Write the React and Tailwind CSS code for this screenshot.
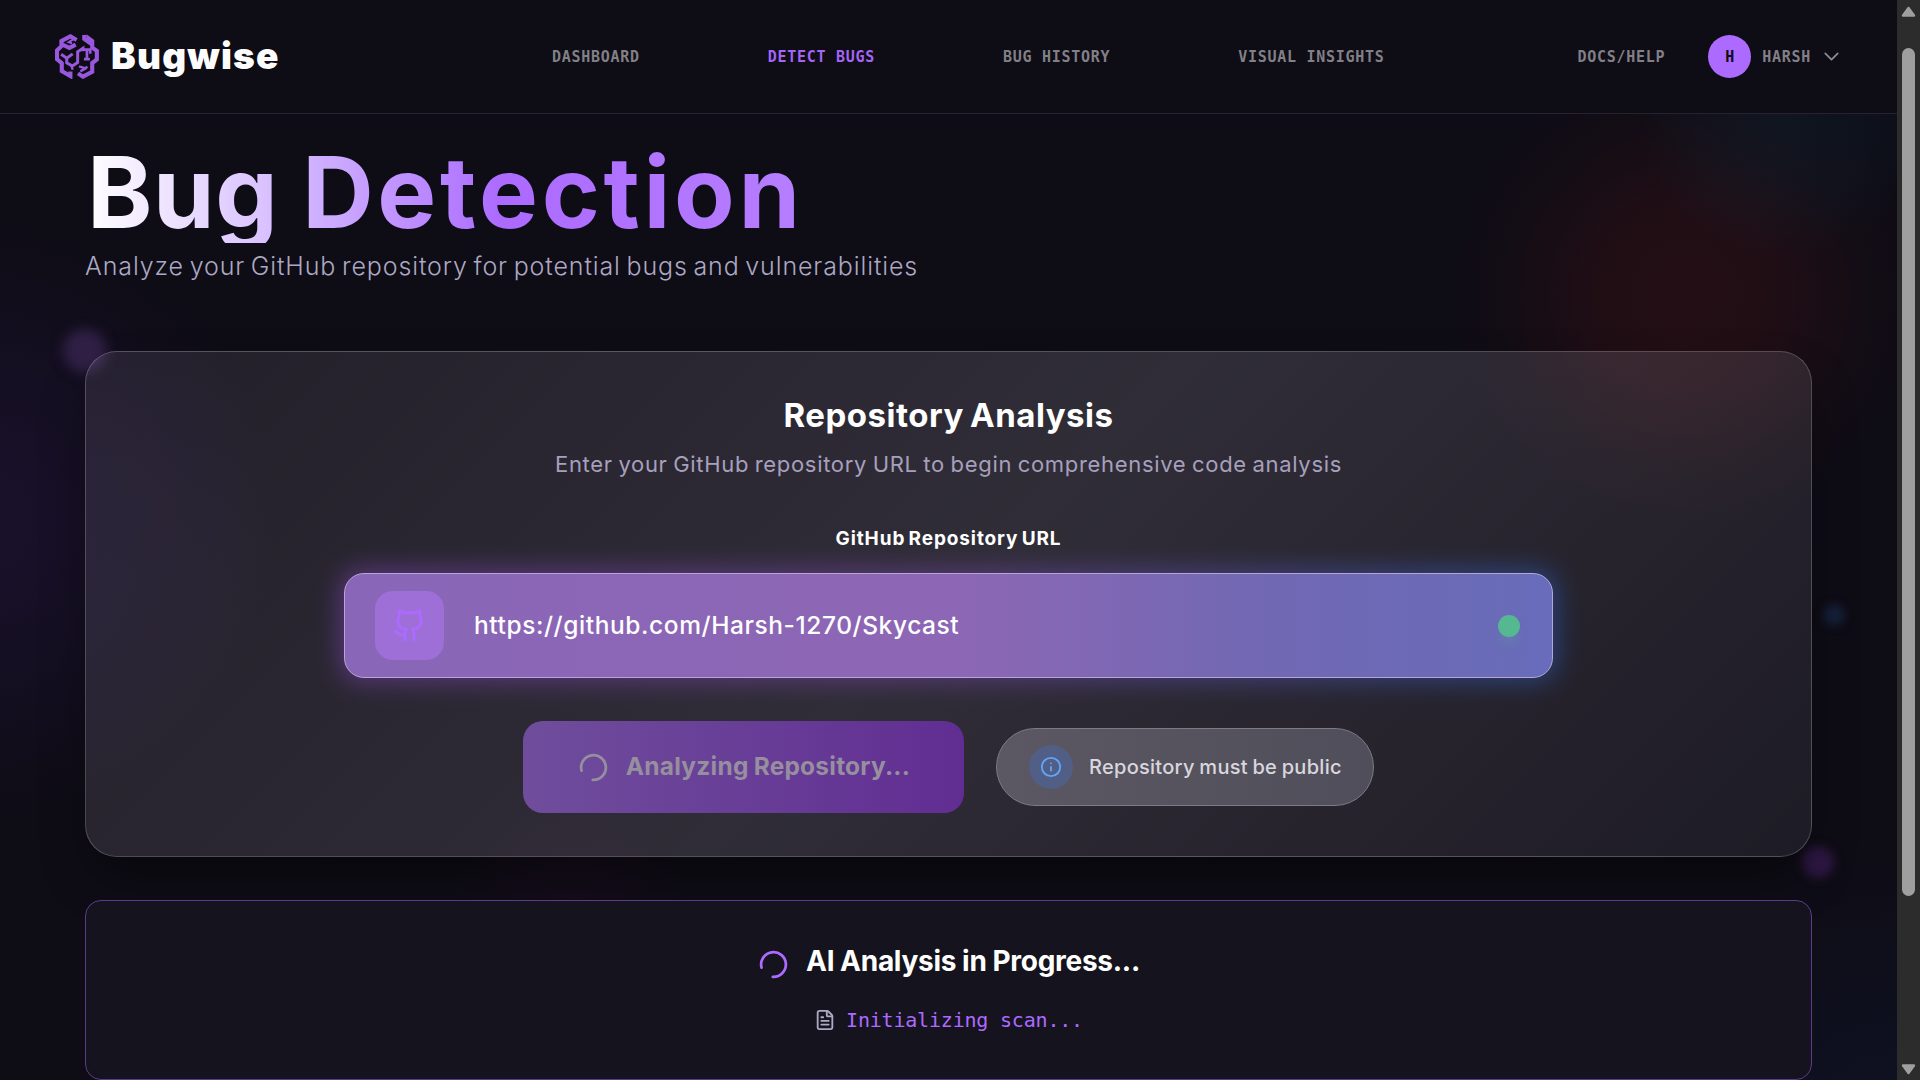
import { ChevronDown, FileText, Github, Info, LoaderCircle } from "lucide-react";

const NAV = [
  { label: "DASHBOARD" },
  { label: "DETECT BUGS", active: true },
  { label: "BUG HISTORY" },
  { label: "VISUAL INSIGHTS" },
];

function BrainLogo() {
  return (
    <svg
      viewBox="0 0 132 136"
      className="h-[45px] w-[44px] shrink-0"
      fill="none"
      stroke="#9857dd"
      strokeWidth="12.5"
      strokeLinejoin="miter"
    >
      <path d="M65 18 L46 7 L19 21 V37 L5.5 50 V76 L20 88 V112 L46 127 V113" />
      <path d="M20 31 L43 42 L62 32" />
      <path d="M57 15 L41 25 L51 28" strokeWidth="6" />
      <path d="M18 61 L35 73 L53 60 M35 73 V87 L52 97 L68 86 V54 L84 43 V52" strokeWidth="9" />
      <path d="M49 95 L53 108" strokeWidth="7" />
      <path d="M88 3 V15 L101 24 V13 L112 21 V41 L126 51 V77 L112 88 V114 L84 129 L69 119" />
      <path d="M84 47 H106 V60 M96 50 V75 M87 76 H105" strokeWidth="8" />
      <path d="M72 98 L92 104 L97 98 M92 104 L76 113" strokeWidth="7.5" />
    </svg>
  );
}

function Header() {
  return (
    <header className="relative z-10 flex h-[114px] items-center border-b border-[#26222f] bg-[#0e0c15] pl-[55px] font-['DejaVu_Sans_Mono',monospace] text-[15px] font-bold tracking-[0.72px] text-[#828087]">
      <div className="flex w-[497px] items-center gap-[12px]">
        <BrainLogo />
        <span className="-mt-px font-['Inter',sans-serif] text-[37px] leading-[44px] font-black tracking-[1.2px] text-[#fcfcfc]">
          Bugwise
        </span>
      </div>
      <nav className="flex gap-[128px] pt-[2px]">
        {NAV.map((n) => (
          <a key={n.label} className={n.active ? "whitespace-nowrap text-[#a465f3]" : "whitespace-nowrap"}>
            {n.label}
          </a>
        ))}
      </nav>
      <a className="ml-[193px] pt-[2px] whitespace-nowrap">DOCS/HELP</a>
      <div className="ml-[43px] flex items-center">
        <span className="flex size-[43px] items-center justify-center rounded-full bg-[#ac6aff] pt-px text-[15px] tracking-normal text-[#0e0c15]">
          H
        </span>
        <span className="ml-[11px] pt-[2px]">HARSH</span>
        <ChevronDown className="ml-[8px] size-[25px] text-[#8f8d94]" strokeWidth={1.6} />
      </div>
    </header>
  );
}

function Glows() {
  return (
    <div className="pointer-events-none absolute inset-0">
      <div className="absolute top-[60px] left-[1450px] size-[470px] rounded-full bg-[radial-gradient(circle,rgba(215,30,20,0.11)_0%,rgba(210,30,20,0.09)_28%,rgba(160,30,20,0.035)_54%,transparent_70%)]" />
      <div className="absolute -top-[30px] left-[1640px] size-[290px] rounded-full bg-[radial-gradient(circle,rgba(10,60,80,0.20)_0%,rgba(10,60,80,0.10)_45%,transparent_70%)]" />
      <div className="absolute top-[210px] -left-[330px] size-[620px] rounded-full bg-[radial-gradient(circle,rgba(110,50,200,0.13)_0%,rgba(100,50,200,0.07)_35%,transparent_68%)]" />
      <div className="absolute top-[850px] left-[1600px] size-[600px] rounded-full bg-[radial-gradient(circle,rgba(20,60,140,0.12)_0%,rgba(20,60,140,0.07)_35%,transparent_70%)]" />
      <div className="absolute top-[790px] left-[450px] size-[240px] rounded-full bg-[radial-gradient(circle,rgba(120,20,100,0.07)_0%,transparent_70%)]" />
      <div className="absolute top-[329px] left-[63px] size-[44px] rounded-full bg-[#302046] blur-[6px]" />
      <div className="absolute top-[604px] left-[1823px] size-[22px] rounded-full bg-[#152038] blur-[4px]" />
      <div className="absolute top-[846px] left-[1802px] size-[32px] rounded-full bg-[#2d1742] blur-[5px]" />
    </div>
  );
}

function RepositoryCard() {
  return (
    <section className="relative mt-[70px] flex h-[506px] flex-col items-center rounded-[32px] border border-white/20 bg-[linear-gradient(135deg,rgba(240,230,255,0.09)_0%,rgba(245,235,255,0.15)_50%,rgba(240,235,255,0.07)_100%)] pt-[43px] shadow-[0_25px_50px_-8px_rgba(0,0,0,0.4)]">
      <h2 className="text-[33px] leading-[40px] font-[650] tracking-[0.5px] text-white [word-spacing:-2px]">
        Repository Analysis
      </h2>
      <p className="mt-[13px] text-[22px] leading-[32px] tracking-[0.68px] text-[#a7a0bd] [word-spacing:-1.2px]">
        Enter your GitHub repository URL to begin comprehensive code analysis
      </p>
      <label className="mt-[45px] text-[19px] leading-[28px] font-[650] tracking-[0.88px] text-white [word-spacing:-2px]">
        GitHub Repository URL
      </label>
      <div className="relative mt-[20px]">
        <div className="absolute -inset-[5px] rounded-[24px] bg-[linear-gradient(90deg,#9a4fe0,#8b4dc4_50%,#2f6fe0)] opacity-40 blur-[12px]" />
        <div className="relative flex h-[105px] w-[1209px] items-center rounded-[20px] border border-[#b6a6d8] bg-[linear-gradient(90deg,#8a66b8_0%,#8d67b5_50%,#7268b3_75%,#686cba_100%)] pr-[32px] pl-[30px]">
          <span className="flex size-[69px] items-center justify-center rounded-[18px] bg-[#9f6fd8]">
            <Github className="size-[35px] text-[#ac6aff]" strokeWidth={2} />
          </span>
          <span className="-mt-px ml-[30px] flex-1 text-[24.5px] leading-[32px] font-[450] tracking-[0.58px] text-white">
            https://github.com/Harsh-1270/Skycast
          </span>
          <span className="size-[22px] rounded-full bg-[#55b890] shadow-[0_10px_12px_-3px_rgba(85,184,144,0.25)]" />
        </div>
      </div>
      <div className="mt-[43px] flex items-center gap-[32px]">
        <button className="flex h-[92px] w-[441px] items-center justify-center gap-[16px] rounded-[20px] bg-linear-to-r from-[#6f4d9c] to-[#612d92] text-[24.5px] font-[650] tracking-[0.22px] text-[#968f9e] [word-spacing:-1px]">
          <LoaderCircle className="size-[33px] rotate-[165deg]" strokeWidth={2} />
          <span className="-mt-[2px]">Analyzing Repository...</span>
        </button>
        <div className="flex h-[78px] w-[378px] items-center rounded-full border border-[#7d7a86] bg-linear-to-r from-[#5b5863] to-[#504e5a] pl-[32px]">
          <span className="flex size-[44px] items-center justify-center rounded-full bg-[#515f86]">
            <Info className="size-[22px] text-[#60a5fa]" strokeWidth={2} />
          </span>
          <span className="ml-[16px] text-[20px] font-medium tracking-[0.28px] text-[#d9d7dd] [word-spacing:-1px]">
            Repository must be public
          </span>
        </div>
      </div>
    </section>
  );
}

function ProgressCard() {
  return (
    <section className="relative mt-[43px] flex h-[180px] flex-col items-center rounded-[16px] border border-[#5c3a8c] bg-[#15131d] pt-[40px]">
      <div className="flex h-[40px] items-center gap-[16px]">
        <LoaderCircle className="mt-[6px] size-[33px] rotate-[165deg] text-[#ac6aff]" strokeWidth={2} />
        <h3 className="text-[28px] leading-[42px] font-[650] tracking-[-0.27px] text-white [word-spacing:-0.5px]">
          AI Analysis in Progress...
        </h3>
      </div>
      <div className="mt-[25px] flex h-[28px] items-center gap-[10px]">
        <FileText className="size-[22px] text-[#ada8c3]" strokeWidth={2} />
        <span className="font-['DejaVu_Sans_Mono',monospace] text-[20px] leading-[28px] tracking-[-0.2px] text-[#ac6aff]">
          Initializing scan...
        </span>
      </div>
    </section>
  );
}

function Scrollbar() {
  return (
    <div className="flex h-full w-[23px] flex-col items-center bg-[#2c2c2c]">
      <svg viewBox="0 0 15 11" className="mt-[6px] h-[11px] w-[15px] shrink-0">
        <path d="M7.5 2 L13 9.5 H2 Z" fill="#9f9f9f" stroke="#9f9f9f" strokeWidth="2.4" strokeLinejoin="round" />
      </svg>
      <div className="mt-[31px] h-[848px] w-[13px] rounded-full bg-[#9f9f9f]" />
      <svg viewBox="0 0 15 12" className="mt-auto mb-[5px] h-[12px] w-[15px] shrink-0">
        <path d="M7.5 10 L13 2.5 H2 Z" fill="#9f9f9f" stroke="#9f9f9f" strokeWidth="2.4" strokeLinejoin="round" />
      </svg>
    </div>
  );
}

export default function App() {
  return (
    <div className="flex h-screen w-full overflow-hidden bg-[#0e0c15] font-['Inter',sans-serif]">
      <div className="relative h-full w-[1897px] overflow-hidden">
        <Glows />
        <Header />
        <main className="relative pt-[25px] pr-[85px] pl-[85px]">
          <div className="w-[833px]">
            <h1 className="h-[104px] bg-linear-to-r from-white via-[#ac6aff] to-[#b985ff] bg-clip-text pl-[2px] text-[99px] leading-[106px] font-[670] tracking-[3.7px] whitespace-nowrap text-transparent">
              <span className="tracking-[0.5px]">Bug </span>Detection
            </h1>
            <p className="mt-[8px] text-[25px] leading-[31px] font-[340] tracking-[0.88px] whitespace-nowrap text-[#ada8c3] [word-spacing:-2.2px]">
              Analyze your GitHub repository for potential bugs and vulnerabilities
            </p>
          </div>
          <div className="-mt-px">
            <RepositoryCard />
          </div>
          <ProgressCard />
        </main>
      </div>
      <Scrollbar />
    </div>
  );
}
